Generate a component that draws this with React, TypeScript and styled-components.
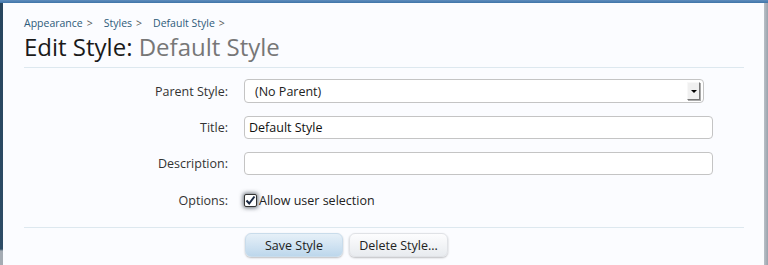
import React from "react";
import styled, { createGlobalStyle } from "styled-components";

const GlobalStyle = createGlobalStyle`
  html, body {
    margin: 0;
    padding: 0;
    background: #a3acb5;
  }
  body {
    font-family: "Open Sans", "DejaVu Sans", sans-serif;
  }
`;

const Frame = styled.div`
  width: 768px;
  height: 265px;
  display: flex;
  flex-direction: column;
  overflow: hidden;
`;

const TopBar = styled.div`
  height: 3px;
  background: linear-gradient(#5f8dbd, #3f74a8);
  flex: none;
`;

const Body = styled.div`
  flex: 1;
  display: flex;
`;

const LeftEdge = styled.div`
  width: 3px;
  background: linear-gradient(#27455e 0, #2d4c66 246px, #a4abb3 248px);
`;

const RightEdge = styled.div`
  width: 4px;
  background: linear-gradient(90deg, #b9c0c7, #9aa3ad);
`;

const Panel = styled.div`
  flex: 1;
  background: #fbfcff;
  padding: 12px 20px 0 21px;
  display: flex;
  flex-direction: column;
`;

const Breadcrumb = styled.div`
  display: flex;
  gap: 11px;
  font-size: 10.5px;
  line-height: 16px;
  height: 16px;
`;

const Crumb = styled.span`
  color: #2e5b7a;
  &::after {
    content: ">";
    color: #555;
    margin-left: 4px;
  }
`;

const Heading = styled.h1`
  margin: 1px 0 0;
  font-weight: normal;
  font-size: 24px;
  line-height: 30px;
  color: #1a1a1a;
`;

const Muted = styled.span`
  color: #777;
`;

const Divider = styled.div<{ $top: number }>`
  height: 1px;
  background: #dde8ef;
  margin-top: ${p => p.$top}px;
`;

const Form = styled.div`
  display: grid;
  grid-template-columns: 204px 469px;
  column-gap: 16px;
  align-items: center;
  margin-top: 11px;
  font-size: 12.5px;
  color: #222;
`;

const Label = styled.div`
  text-align: right;
  color: #333;
`;

const Field = styled.div<{ $gap: number }>`
  margin-top: ${p => p.$gap}px;
`;

const Select = styled.div`
  width: 460px;
  height: 24px;
  box-sizing: border-box;
  border: 1px solid #c4c4c4;
  border-radius: 4px;
  background: #fff;
  display: flex;
  align-items: center;
  padding: 0 3px 0 10px;
  justify-content: space-between;
`;

const Arrow = styled.span`
  width: 13px;
  height: 18px;
  box-sizing: border-box;
  background: #f0f0f0;
  border: 1px solid;
  border-color: #f8f8f8 #777 #777 #f8f8f8;
  box-shadow: 1px 1px 0 #aaa;
  display: flex;
  align-items: center;
  justify-content: center;
  &::before {
    content: "";
    border-left: 3px solid transparent;
    border-right: 3px solid transparent;
    border-top: 3px solid #000;
    margin-top: 1px;
  }
`;

const Input = styled.div`
  width: 469px;
  height: 23px;
  box-sizing: border-box;
  border: 1px solid #c4c4c4;
  border-radius: 4px;
  background: #fff;
  display: flex;
  align-items: center;
  padding: 0 4px;
  color: #111;
`;

const CheckRow = styled.div`
  display: flex;
  align-items: center;
  gap: 2px;
`;

const Check = styled.span`
  width: 13px;
  height: 13px;
  box-sizing: border-box;
  border: 1px solid #333;
  border-radius: 2px;
  background: #fff;
  box-shadow: 0 0 4px 1px rgba(40, 50, 60, 0.7);
  display: flex;
  align-items: center;
  justify-content: center;
`;

const Buttons = styled.div`
  display: flex;
  gap: 6px;
  margin: 5px 0 0 221px;
`;

const Button = styled.div<{ $primary?: boolean; $w: number }>`
  width: ${p => p.$w}px;
  height: 24px;
  box-sizing: border-box;
  white-space: nowrap;
  border-radius: 6px;
  font-size: 12.5px;
  display: flex;
  align-items: center;
  justify-content: center;
  color: #222;
  border: 1px solid ${p => (p.$primary ? "#c9dceb" : "#e0e2e6")};
  background: ${p =>
    p.$primary
      ? "linear-gradient(#e6f0f8, #bdd7ec)"
      : "linear-gradient(#fdfdfe, #e8ebef)"};
  box-shadow: 0 1px 2px rgba(0, 0, 0, 0.25);
`;

export default function App() {
  return (
    <>
      <GlobalStyle />
      <Frame>
        <TopBar />
        <Body>
          <LeftEdge />
          <Panel>
            <Breadcrumb>
              <Crumb>Appearance</Crumb>
              <Crumb>Styles</Crumb>
              <Crumb>Default Style</Crumb>
            </Breadcrumb>
            <Heading>
              Edit Style: <Muted>Default Style</Muted>
            </Heading>
            <Divider $top={5} />
            <Form>
              <Label>Parent Style:</Label>
              <Select>
                <span>(No Parent)</span>
                <Arrow />
              </Select>
              <Field $gap={13} as={Label}>Title:</Field>
              <Field $gap={13}>
                <Input>Default Style</Input>
              </Field>
              <Field $gap={13} as={Label}>Description:</Field>
              <Field $gap={13}>
                <Input />
              </Field>
              <Field $gap={17} as={Label}>Options:</Field>
              <Field $gap={17}>
                <CheckRow>
                  <Check>
                    <svg width="11" height="11" viewBox="0 0 11 11">
                      <path d="M1.5 5.5 L4.2 8.5 L9.5 1.5" fill="none" stroke="#1b2a44" strokeWidth="2" />
                    </svg>
                  </Check>
                  <span>Allow user selection</span>
                </CheckRow>
              </Field>
            </Form>
            <Divider $top={18} />
            <Buttons>
              <Button $primary $w={98}>Save Style</Button>
              <Button $w={99}>Delete Style...</Button>
            </Buttons>
          </Panel>
          <RightEdge />
        </Body>
      </Frame>
    </>
  );
}
